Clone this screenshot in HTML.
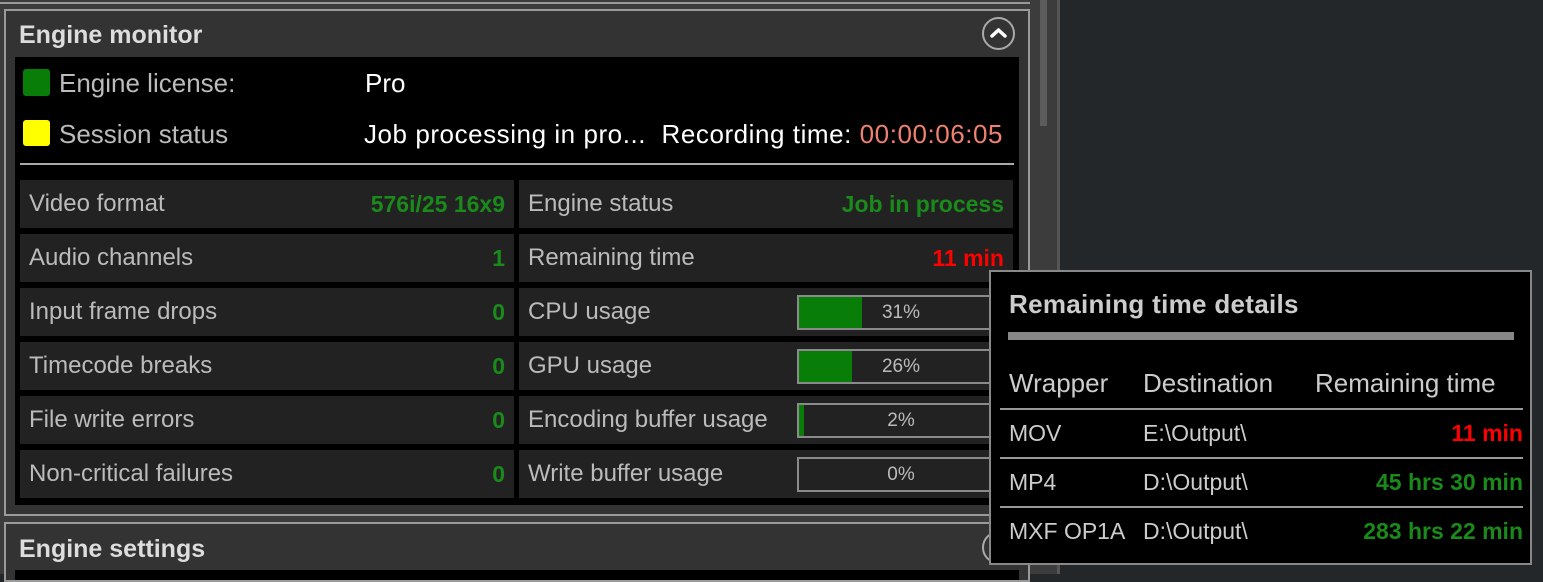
<!DOCTYPE html>
<html><head><style>
*{margin:0;padding:0;box-sizing:border-box}
body{width:1543px;height:574px;background:#23272a;position:relative;overflow:hidden;font-family:"Liberation Sans",sans-serif}
.a{position:absolute}
.cell{position:absolute;background:#222;height:48px;width:494px;color:#bbb;font-size:24px;line-height:48px;padding-left:9px}
.cell b{position:absolute;right:9px;top:0;color:#1a8a1a;font-weight:bold;font-size:23px}
.bar{position:absolute;left:278px;top:7px;width:208px;height:35px;border:2px solid #8a8a8a;background:#222}
.bar i{position:absolute;left:0;top:0;bottom:0;background:#087d08}
.bar span{position:absolute;left:0;right:0;top:0;line-height:31px;text-align:center;color:#bbb;font-size:19px}
.pt{position:absolute;color:#ccc;font-size:23px}
</style></head><body>
<div class="a" style="left:0;top:0;width:1058px;height:574px;background:#3c3c3c"></div>
<div class="a" style="left:0;top:0;width:1030px;height:4px;border-bottom:2px solid #999"></div>
<div class="a" style="left:1040px;top:0;width:7px;height:126px;background:#5c5c5c"></div>
<div class="a" style="left:1057px;top:0;width:3px;height:574px;background:#555"></div>
<div class="a" style="left:4px;top:9px;width:1026px;height:507px;border:2px solid #9a9a9a;background:#333"></div>
<div class="a" style="left:19px;top:21px;color:#ddd;font-size:25px;font-weight:bold">Engine monitor</div>
<div class="a" style="left:982px;top:17px;width:33px;height:33px;border:2px solid #aaa;border-radius:50%"></div>
<svg class="a" style="left:982px;top:17px" width="33" height="33"><path d="M10 19 L16.5 13 L23 19" stroke="#fff" stroke-width="3.5" fill="none" stroke-linecap="round" stroke-linejoin="round"/></svg>
<div class="a" style="left:15px;top:57px;width:1004px;height:448px;background:#000"></div>
<div class="a" style="left:23px;top:69px;width:27px;height:27px;background:#087d08;border-radius:3px"></div>
<div class="a" style="left:23px;top:120px;width:27px;height:26px;background:#ff0;border-radius:3px"></div>
<div class="a" style="left:59px;top:68px;color:#bbb;font-size:26px">Engine license:</div>
<div class="a" style="left:59px;top:119px;color:#bbb;font-size:26px">Session status</div>
<div class="a" style="left:365px;top:68px;color:#fff;font-size:26px">Pro</div>
<div class="a" style="left:364px;top:119px;color:#fff;font-size:26px;white-space:nowrap;letter-spacing:0.55px">Job processing in pro...&nbsp; Recording time: <span style="color:#f08070">00:00:06:05</span></div>
<div class="a" style="left:20px;top:163px;width:994px;height:2px;background:#aaa"></div>

<div class="cell" style="left:20px;top:180px">Video format<b>576i/25 16x9</b></div>
<div class="cell" style="left:20px;top:234px">Audio channels<b>1</b></div>
<div class="cell" style="left:20px;top:288px">Input frame drops<b>0</b></div>
<div class="cell" style="left:20px;top:342px">Timecode breaks<b>0</b></div>
<div class="cell" style="left:20px;top:396px">File write errors<b>0</b></div>
<div class="cell" style="left:20px;top:450px">Non-critical failures<b>0</b></div>
<div class="cell" style="left:519px;top:180px">Engine status<b>Job in process</b></div>
<div class="cell" style="left:519px;top:234px">Remaining time<b style="color:#f00">11 min</b></div>
<div class="cell" style="left:519px;top:288px">CPU usage<div class="bar"><i style="width:63px"></i><span>31%</span></div></div>
<div class="cell" style="left:519px;top:342px">GPU usage<div class="bar"><i style="width:53px"></i><span>26%</span></div></div>
<div class="cell" style="left:519px;top:396px">Encoding buffer usage<div class="bar"><i style="width:5px"></i><span>2%</span></div></div>
<div class="cell" style="left:519px;top:450px">Write buffer usage<div class="bar"><span>0%</span></div></div>
<div class="a" style="left:4px;top:522px;width:1026px;height:60px;border:2px solid #9a9a9a;background:#333"></div>
<div class="a" style="left:19px;top:535px;color:#ddd;font-size:25px;font-weight:bold">Engine settings</div>
<div class="a" style="left:982px;top:531px;width:33px;height:33px;border:2px solid #aaa;border-radius:50%"></div>
<div class="a" style="left:15px;top:570px;width:1004px;height:10px;background:#000"></div>
<div class="a" style="left:989px;top:270px;width:543px;height:295px;background:#000;border:2px solid #888"></div>
<div class="a" style="left:1009px;top:289px;color:#ccc;font-size:26px;font-weight:bold;letter-spacing:0.3px">Remaining time details</div>
<div class="a" style="left:1008px;top:332px;width:506px;height:8px;background:#888"></div>
<div class="pt" style="left:1009px;top:368px;font-size:26px">Wrapper</div>
<div class="pt" style="left:1143px;top:368px;font-size:26px">Destination</div>
<div class="pt" style="left:1315px;top:368px;font-size:26px">Remaining time</div>
<div class="a" style="left:1000px;top:408px;width:523px;height:2px;background:#999"></div>
<div class="a" style="left:1000px;top:457px;width:523px;height:2px;background:#999"></div>
<div class="a" style="left:1000px;top:506px;width:523px;height:2px;background:#999"></div>
<div class="pt" style="left:1009px;top:420px">MOV</div>
<div class="pt" style="left:1143px;top:420px">E:\Output\</div>
<div class="pt" style="right:20px;top:420px;color:#f00;font-weight:bold">11 min</div>
<div class="pt" style="left:1009px;top:469px">MP4</div>
<div class="pt" style="left:1143px;top:469px">D:\Output\</div>
<div class="pt" style="right:20px;top:469px;color:#1a8a1a;font-weight:bold">45 hrs 30 min</div>
<div class="pt" style="left:1009px;top:518px">MXF OP1A</div>
<div class="pt" style="left:1143px;top:518px">D:\Output\</div>
<div class="pt" style="right:20px;top:518px;color:#1a8a1a;font-weight:bold">283 hrs 22 min</div>
</body></html>
